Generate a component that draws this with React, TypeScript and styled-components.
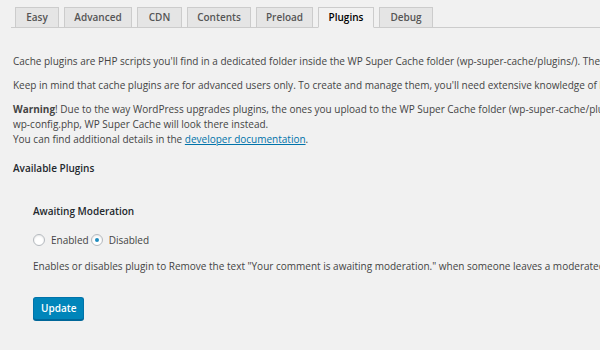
import styled, { createGlobalStyle } from "styled-components";

const GlobalStyle = createGlobalStyle`
  html, body {
    margin: 0;
    padding: 0;
    background: #f1f1f1;
  }
  body {
    font-family: "Open Sans", "Noto Sans", sans-serif;
    font-size: 10px;
    color: #444;
  }
`;

const Page = styled.div`
  width: 600px;
  height: 350px;
  overflow: hidden;
  padding-top: 7px;
  box-sizing: border-box;
`;

const TabBar = styled.nav`
  display: flex;
  align-items: flex-end;
  margin-left: 11px;
  padding-left: 4px;
  border-bottom: 1px solid #ccc;
  width: 620px;
`;

const Tab = styled.a<{ $active?: boolean; $w: number }>`
  display: block;
  box-sizing: border-box;
  width: ${(p) => p.$w}px;
  height: 21px;
  margin-right: 5px;
  margin-bottom: -1px;
  border: 1px solid #ccc;
  border-bottom-color: ${(p) => (p.$active ? "#f1f1f1" : "#ccc")};
  background: ${(p) => (p.$active ? "#f1f1f1" : "#e5e5e5")};
  color: ${(p) => (p.$active ? "#000" : "#555")};
  font-size: 10px;
  font-weight: 600;
  line-height: 19px;
  text-align: center;
  text-decoration: none;
  white-space: nowrap;
`;

const Content = styled.div`
  padding: 26px 0 0 13px;
  white-space: nowrap;
`;

const Para = styled.p<{ $gap?: number }>`
  margin: ${(p) => p.$gap ?? 0}px 0 9px;
  font-size: 10px;
  line-height: 15px;
`;

const Link = styled.a`
  color: #0073aa;
  text-decoration: underline;
`;

const Heading = styled.h3`
  margin: 14px 0 0;
  font-size: 10px;
  font-weight: 600;
  line-height: 15px;
  color: #23282d;
`;

const Plugin = styled.div`
  padding: 28px 0 0 20px;
`;

const PluginTitle = styled.h4`
  margin: 0;
  font-size: 10px;
  font-weight: 600;
  line-height: 15px;
  color: #23282d;
`;

const RadioRow = styled.div`
  display: flex;
  align-items: center;
  margin-top: 13px;
  height: 15px;
`;

const RadioLabel = styled.label`
  display: flex;
  align-items: center;
  gap: 6px;
  margin-right: 2px;
`;

const Radio = styled.span<{ $checked?: boolean }>`
  position: relative;
  width: 12px;
  height: 12px;
  box-sizing: border-box;
  border: 1px solid #b4b9be;
  border-radius: 50%;
  background: #fff;
  box-shadow: inset 0 1px 2px rgba(0, 0, 0, 0.1);
  &::after {
    content: "";
    display: ${(p) => (p.$checked ? "block" : "none")};
    position: absolute;
    left: 3px;
    top: 3px;
    width: 4px;
    height: 4px;
    border-radius: 50%;
    background: #1e8cbe;
  }
`;

const Desc = styled.p`
  margin: 12px 0 0;
  font-size: 10px;
  line-height: 15px;
`;

const Button = styled.button`
  margin-top: 23px;
  height: 23px;
  padding: 0 7px;
  box-sizing: border-box;
  border: 1px solid #0073aa;
  border-bottom-color: #006799;
  border-radius: 3px;
  background: #0085ba;
  box-shadow: 0 1px 0 #006799;
  color: #fff;
  font-family: "Open Sans", "Noto Sans", sans-serif;
  font-size: 10px;
  font-weight: 600;
  line-height: 19px;
`;

const tabs = [
  { label: "Easy", w: 44 },
  { label: "Advanced", w: 68 },
  { label: "CDN", w: 45 },
  { label: "Contents", w: 64 },
  { label: "Preload", w: 57 },
  { label: "Plugins", w: 56, active: true },
  { label: "Debug", w: 54 },
];

export default function App() {
  return (
    <Page>
      <GlobalStyle />
      <TabBar>
        {tabs.map((t) => (
          <Tab key={t.label} $w={t.w} $active={t.active} href="#">
            {t.label}
          </Tab>
        ))}
      </TabBar>
      <Content>
        <Para>
          Cache plugins are PHP scripts you'll find in a dedicated folder inside the WP Super Cache
          folder (wp-super-cache/plugins/). They are loaded when Supercache loads, much sooner than
          regular WordPress plugins.
        </Para>
        <Para>
          Keep in mind that cache plugins are for advanced users only. To create and manage them,
          you'll need extensive knowledge of both PHP and WordPress actions.
        </Para>
        <Para $gap={2}>
          <strong>Warning</strong>! Due to the way WordPress upgrades plugins, the ones you upload to
          the WP Super Cache folder (wp-super-cache/plugins/) will be deleted when you upgrade WP
          Super Cache.
          <br />
          wp-config.php, WP Super Cache will look there instead.
          <br />
          You can find additional details in the <Link href="#">developer documentation</Link>.
        </Para>
        <Heading>Available Plugins</Heading>
        <Plugin>
          <PluginTitle>Awaiting Moderation</PluginTitle>
          <RadioRow>
            <RadioLabel>
              <Radio />
              Enabled
            </RadioLabel>
            <RadioLabel>
              <Radio $checked />
              Disabled
            </RadioLabel>
          </RadioRow>
          <Desc>
            Enables or disables plugin to Remove the text "Your comment is awaiting moderation." when
            someone leaves a moderated comment.
          </Desc>
          <Button>Update</Button>
        </Plugin>
      </Content>
    </Page>
  );
}
